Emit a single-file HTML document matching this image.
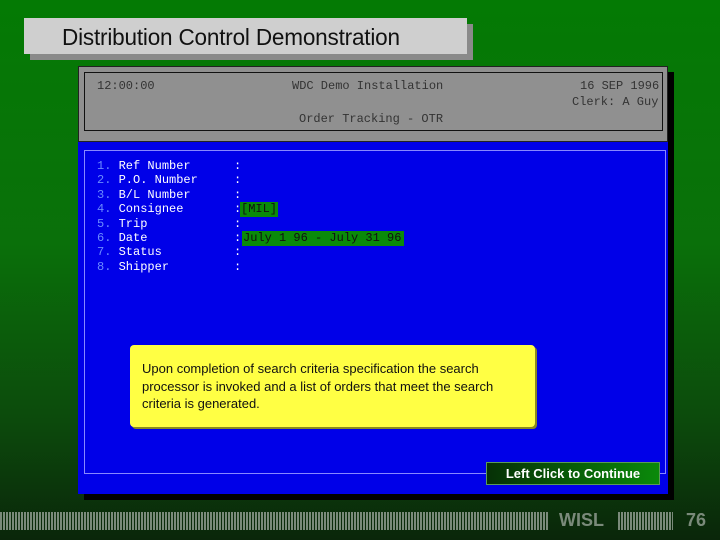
<!DOCTYPE html>
<html><head><style>
body{margin:0;width:720px;height:540px;overflow:hidden;background:linear-gradient(#047a04 0%,#0a700a 45%,#0c4a0c 78%,#0a260a 100%);font-family:"Liberation Sans",sans-serif;position:relative}
.a{position:absolute}
.mono{font-family:"Liberation Mono",monospace;font-size:12px;white-space:pre}
</style></head><body>
<div class="a" style="left:30px;top:24px;width:443px;height:36px;background:#8a8a8a"></div>
<div class="a" style="left:24px;top:18px;width:443px;height:36px;background:#cfcfcf;font-size:23px;color:#111;line-height:38px;padding-left:38px;box-sizing:border-box;letter-spacing:-0.2px"><span style="display:inline-block;transform:scaleX(0.98);transform-origin:left">Distribution Control Demonstration</span></div>

<div class="a" style="left:84px;top:72px;width:590px;height:428px;background:#000"></div>
<div class="a" style="left:78px;top:66px;width:590px;height:76px;background:#909090;border:1px solid #222;box-sizing:border-box"></div>
<div class="a" style="left:84px;top:72px;width:579px;height:59px;border:1px solid #111;box-sizing:border-box"></div>
<div class="a mono" style="left:97px;top:79px;color:#333">12:00:00</div>
<div class="a mono" style="left:292px;top:79px;color:#333">WDC Demo Installation</div>
<div class="a mono" style="left:580px;top:79px;color:#333">16 SEP 1996</div>
<div class="a mono" style="left:572px;top:95px;color:#333">Clerk: A Guy</div>
<div class="a mono" style="left:299px;top:112px;color:#333">Order Tracking - OTR</div>

<div class="a" style="left:78px;top:142px;width:590px;height:352px;background:#0000e8"></div>
<div class="a" style="left:84px;top:150px;width:582px;height:324px;border:1px solid #8888ff;box-sizing:border-box"></div>
<div class="a mono" style="left:97px;top:159px;line-height:14.4px;color:#fff"><span style="color:#6a8aff">1.</span> Ref Number
<span style="color:#6a8aff">2.</span> P.O. Number
<span style="color:#6a8aff">3.</span> B/L Number
<span style="color:#6a8aff">4.</span> Consignee
<span style="color:#6a8aff">5.</span> Trip
<span style="color:#6a8aff">6.</span> Date
<span style="color:#6a8aff">7.</span> Status
<span style="color:#6a8aff">8.</span> Shipper</div>
<div class="a mono" style="left:234px;top:159px;line-height:14.4px;color:#fff">:
:
:
:
:
:
:
:</div>
<div class="a mono" style="left:240px;top:202px;background:#0a8a0a;color:#111;padding:0 1px;line-height:15px">[MIL]</div>
<div class="a mono" style="left:242px;top:231px;background:#0a8a0a;color:#111;padding:0 1px;width:160px;line-height:15px">July 1 96 - July 31 96</div>

<div class="a" style="left:130px;top:345px;width:405px;height:82px;background:#ffff44;border-radius:4px;box-shadow:2px 2px 0 #8a8a20;font-size:13px;line-height:17.5px;color:#111;padding:15px 30px 0 12px;box-sizing:border-box">Upon completion of search criteria specification the search processor is invoked and a list of orders that meet the search criteria is generated.</div>

<div class="a" style="left:486px;top:462px;width:174px;height:23px;background:linear-gradient(90deg,#063006,#0a8a0a);border:1px solid #5a9a5a;box-sizing:border-box;color:#fff;font-weight:bold;font-size:13px;line-height:21px;text-align:center">Left Click to Continue</div>

<div class="a" style="left:0;top:512px;width:548px;height:18px;background:repeating-linear-gradient(90deg,#7a8a7a 0 2px,transparent 2px 3px)"></div>
<div class="a" style="left:559px;top:510px;color:#7a8a7a;font-weight:bold;font-size:18px">WISL</div>
<div class="a" style="left:618px;top:512px;width:55px;height:18px;background:repeating-linear-gradient(90deg,#7a8a7a 0 2px,transparent 2px 3px)"></div>
<div class="a" style="left:686px;top:510px;color:#7a8a7a;font-weight:bold;font-size:18px">76</div>
</body></html>
